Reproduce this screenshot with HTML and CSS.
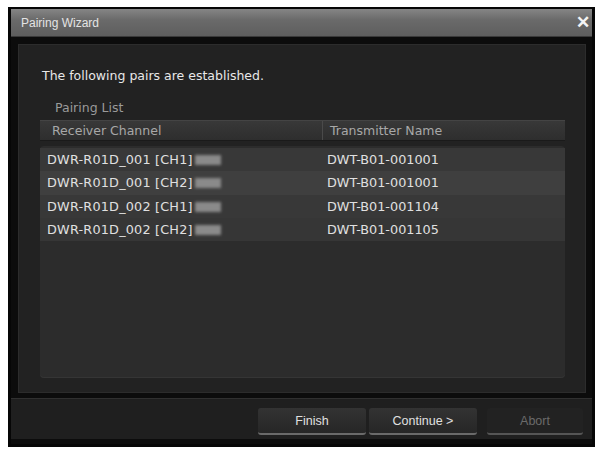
FILE: index.html
```html
<!DOCTYPE html>
<html lang="en">
<head>
    <meta charset="UTF-8">
    <title>Pairing Wizard</title>
    <link rel="stylesheet" href="styles.css">
</head>
<body>
    <div class="window">
        <div class="titlebar">
            <span class="title">Pairing Wizard</span>
            <span class="close">&#x2715;</span>
        </div>
        <div class="content">
            <p class="message">The following pairs are established.</p>
            <div class="list-label">Pairing List</div>
            <div class="table-head">
                <div class="col col-rx">Receiver Channel</div>
                <div class="col col-tx">Transmitter Name</div>
            </div>
            <div class="list">
                <div class="row">
                    <div class="col col-rx">DWR-R01D_001 [CH1]<span class="blur"></span></div>
                    <div class="col col-tx">DWT-B01-001001</div>
                </div>
                <div class="row">
                    <div class="col col-rx">DWR-R01D_001 [CH2]<span class="blur"></span></div>
                    <div class="col col-tx">DWT-B01-001001</div>
                </div>
                <div class="row">
                    <div class="col col-rx">DWR-R01D_002 [CH1]<span class="blur"></span></div>
                    <div class="col col-tx">DWT-B01-001104</div>
                </div>
                <div class="row">
                    <div class="col col-rx">DWR-R01D_002 [CH2]<span class="blur"></span></div>
                    <div class="col col-tx">DWT-B01-001105</div>
                </div>
            </div>
        </div>
        <div class="footer">
            <button class="btn">Finish</button>
            <button class="btn">Continue &gt;</button>
            <button class="btn btn-disabled">Abort</button>
        </div>
    </div>
</body>
</html>
```

FILE: styles.css
```css
body {
    margin: 0;
    background: #fff;
    font-family: 'DejaVu Sans', Verdana, sans-serif;
}
.window {
    margin: 7px 3px 0 8px;
    width: 581px;
    height: 435px;
    background: #0c0c0c;
    border: 3px solid #060606;
    border-top-width: 2px;
    display: flex;
    flex-direction: column;
}
.titlebar {
    height: 27px;
    background: linear-gradient(#858585, #6a6a6a 40%, #5e5e5e);
    display: flex;
    align-items: center;
    justify-content: space-between;
    padding: 0 2px 0 10px;
    border-bottom: 1px solid #3a3a3a;
}
.title {
    color: #e4e4e4;
    font-family: 'Liberation Sans', Arial, sans-serif;
    font-size: 12px;
}
.close {
    color: #f4f4f4;
    font-family: 'Liberation Sans', Arial, sans-serif;
    font-size: 17px;
    font-weight: bold;
}
.content {
    margin: 7px 6px 0 7px;
    height: 347px;
    flex-shrink: 0;
    background: #222;
    border: 1px solid #2c2c2c;
    padding: 0 20px 0 9px;
}
.message {
    margin: 23px 0 0 14px;
    line-height: 16px;
    color: #e8e8e8;
    font-size: 12.5px;
}
.list-label {
    margin: 16px 0 0 27px;
    line-height: 16px;
    color: #9a9a9a;
    font-size: 12.5px;
}
.table-head {
    display: flex;
    margin: 4px 0 0 12px;
    height: 19px;
    background: linear-gradient(#383838, #2e2e2e);
    border-top: 1px solid #444;
    border-bottom: 1px solid #1a1a1a;
    color: #a8a8a8;
    font-size: 12.5px;
    line-height: 19px;
}
.table-head .col-rx {
    width: 270px;
    padding-left: 12px;
}
.table-head .col-tx {
    border-left: 1px solid #4a4a4a;
    padding-left: 7px;
}
.col-tx {
    flex: 1;
}
.list {
    margin: 5px 0 0 12px;
    height: 230px;
    padding-top: 2px;
    background: #2c2c2c;
    border-radius: 4px;
    box-shadow: inset 0 -1px 0 #353535;
}
.row {
    display: flex;
    height: 23.3px;
    align-items: center;
    color: #e0e0e0;
    font-size: 12.8px;
    background: #383838;
}
.row:nth-child(even) {
    background: #3f3f3f;
}
.row:last-child {
    background: #363636;
}
.row .col-rx {
    width: 280px;
    padding-left: 7px;
    letter-spacing: 0.2px;
}
.blur {
    display: inline-block;
    width: 26px;
    height: 10px;
    margin-left: 2px;
    background: #8a8a8a;
    filter: blur(1.5px);
    vertical-align: -1px;
}
.footer {
    flex: 1;
    margin: 5px 0 5px 0;
    border-top: 1px solid #303030;
    background: #1f1f1f;
    display: flex;
    justify-content: flex-end;
    align-items: flex-end;
    padding: 0 9px 4px 0;
}
.btn {
    width: 108px;
    height: 27px;
    margin-left: 3px;
    font-family: 'Liberation Sans', Arial, sans-serif;
    font-size: 12.5px;
    color: #e0e0e0;
    background: linear-gradient(#333, #262626);
    border: none;
    border-bottom: 2px solid #6a6a6a;
    border-radius: 3px;
}
.btn-disabled {
    width: 96px;
    margin-left: 10px;
    color: #6a6a6a;
    background: #222;
    border-bottom-color: #555;
}
```
